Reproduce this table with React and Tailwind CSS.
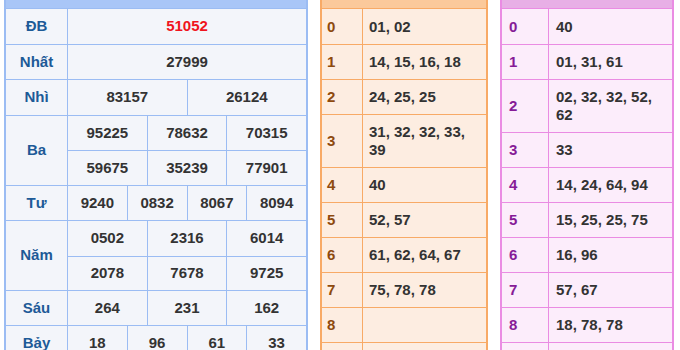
import React from "react";

const BL = "bg-[#f3f5fa] flex items-center justify-center text-[#333] font-bold text-[15px]";
const LB = "bg-[#f3f5fa] flex items-center justify-center text-[#1d5a97] font-bold text-[15px]";

function BlueTable() {
  return (
    <div className="w-[304px] shrink-0 border-x-2 border-[#9bbcf3] bg-[#9bbcf3] grid grid-cols-[61px_repeat(12,minmax(0,1fr))] gap-px grid-rows-[8px_35px_34px_35px_34px_34px_34px_35px_33px_34px_34px] self-start">
      <div className="col-span-13 bg-[#a9c6f7]" />
      <div className={LB}>ĐB</div>
      <div className={`${BL} col-span-12 text-[#f0141e]`}>51052</div>
      <div className={LB}>Nhất</div>
      <div className={`${BL} col-span-12`}>27999</div>
      <div className={LB}>Nhì</div>
      <div className={`${BL} col-span-6`}>83157</div>
      <div className={`${BL} col-span-6`}>26124</div>
      <div className={`${LB} row-span-2`}>Ba</div>
      <div className={`${BL} col-span-4`}>95225</div>
      <div className={`${BL} col-span-4`}>78632</div>
      <div className={`${BL} col-span-4`}>70315</div>
      <div className={`${BL} col-span-4`}>59675</div>
      <div className={`${BL} col-span-4`}>35239</div>
      <div className={`${BL} col-span-4`}>77901</div>
      <div className={LB}>Tư</div>
      <div className={`${BL} col-span-3`}>9240</div>
      <div className={`${BL} col-span-3`}>0832</div>
      <div className={`${BL} col-span-3`}>8067</div>
      <div className={`${BL} col-span-3`}>8094</div>
      <div className={`${LB} row-span-2`}>Năm</div>
      <div className={`${BL} col-span-4`}>0502</div>
      <div className={`${BL} col-span-4`}>2316</div>
      <div className={`${BL} col-span-4`}>6014</div>
      <div className={`${BL} col-span-4`}>2078</div>
      <div className={`${BL} col-span-4`}>7678</div>
      <div className={`${BL} col-span-4`}>9725</div>
      <div className={LB}>Sáu</div>
      <div className={`${BL} col-span-4`}>264</div>
      <div className={`${BL} col-span-4`}>231</div>
      <div className={`${BL} col-span-4`}>162</div>
      <div className={LB}>Bảy</div>
      <div className={`${BL} col-span-3`}>18</div>
      <div className={`${BL} col-span-3`}>96</div>
      <div className={`${BL} col-span-3`}>61</div>
      <div className={`${BL} col-span-3`}>33</div>
    </div>
  );
}

const orangeRows = [
  ["0", "01, 02"],
  ["1", "14, 15, 16, 18"],
  ["2", "24, 25, 25"],
  ["3", "31, 32, 32, 33, 39"],
  ["4", "40"],
  ["5", "52, 57"],
  ["6", "61, 62, 64, 67"],
  ["7", "75, 78, 78"],
  ["8", ""],
  ["", ""],
];

const purpleRows = [
  ["0", "40"],
  ["1", "01, 31, 61"],
  ["2", "02, 32, 32, 52, 62"],
  ["3", "33"],
  ["4", "14, 24, 64, 94"],
  ["5", "15, 25, 25, 75"],
  ["6", "16, 96"],
  ["7", "57, 67"],
  ["8", "18, 78, 78"],
  ["", ""],
];

function OrangeTable() {
  return (
    <div className="w-[168px] shrink-0 border-x-2 border-[#f8aa66] bg-[#f8aa66] grid grid-cols-[40px_minmax(0,1fr)] gap-px self-start">
      <div className="col-span-2 h-[8px] bg-[#fbc99b]" />
      {orangeRows.map(([k, v], i) => (
        <React.Fragment key={i}>
          <div className="bg-[#fdede1] flex items-center pl-[5px] text-[#8e4a0e] font-bold text-[15px] leading-[18px]">{k}</div>
          <div className={`bg-[#fdede1] ${i === 0 ? "min-h-[35px] pt-[9px]" : "min-h-[34px] pt-[8px]"} pb-[8px] pl-[6px] pr-[6px] text-[#333] font-bold text-[15px] leading-[18px]`}>{v}</div>
        </React.Fragment>
      ))}
    </div>
  );
}

function PurpleTable() {
  return (
    <div className="w-[174px] shrink-0 border-x-2 border-[#ea8ce3] bg-[#ea8ce3] grid grid-cols-[46px_minmax(0,1fr)] gap-px self-start">
      <div className="col-span-2 h-[8px] bg-[#e8afe6]" />
      {purpleRows.map(([k, v], i) => (
        <React.Fragment key={i}>
          <div className="bg-[#fcedfb] flex items-center pl-[7px] text-[#861b97] font-bold text-[15px] leading-[18px]">{k}</div>
          <div className={`bg-[#fcedfb] ${i === 0 ? "min-h-[35px] pt-[9px]" : "min-h-[34px] pt-[8px]"} pb-[8px] pl-[7px] pr-[6px] text-[#333] font-bold text-[15px] leading-[18px]`}>{v}</div>
        </React.Fragment>
      ))}
    </div>
  );
}

export default function App() {
  return (
    <div className="w-[680px] h-[350px] overflow-hidden bg-white font-['Liberation_Sans',Arial,sans-serif]">
      <div className="flex gap-[12px] pl-[4px]">
        <BlueTable />
        <OrangeTable />
        <PurpleTable />
      </div>
    </div>
  );
}
